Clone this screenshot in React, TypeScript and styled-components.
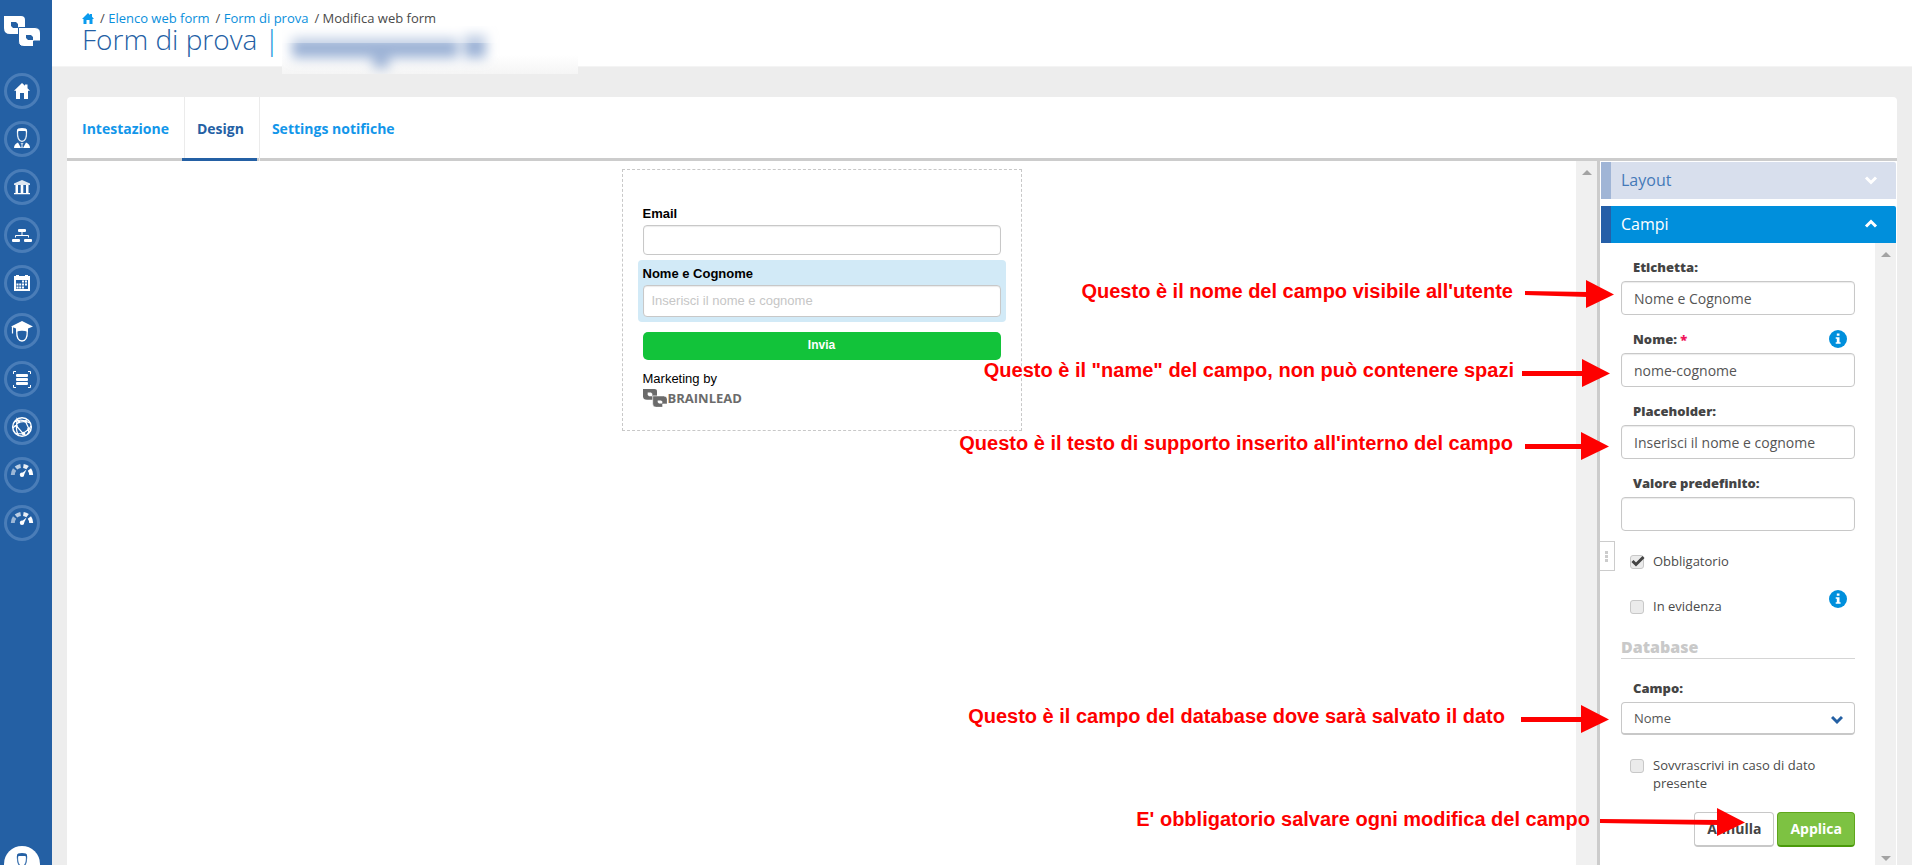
import React from "react";
import styled, { createGlobalStyle, css } from "styled-components";

const GlobalStyle = createGlobalStyle`
  *, *::before, *::after { box-sizing: border-box; }
  body {
    margin: 0;
    background: #ededed;
    color: #4a4a4a;
    font-family: "Open Sans", "Noto Sans", sans-serif;
    font-size: 13px;
    line-height: 18px;
  }
  a { color: inherit; text-decoration: none; }
  button, input, select { font: inherit; color: inherit; margin: 0; }
`;

/* ---------- shell ---------- */

const Shell = styled.div`
  position: relative;
  display: flex;
  height: 100vh;
  overflow: hidden;
`;

const Sidebar = styled.nav`
  display: flex;
  flex-direction: column;
  flex: none;
  width: 52px;
  padding: 16px 4px 0;
  background: #2460a4;
`;

const Brand = styled.a`
  display: block;
  height: 57px;
`;

const NavList = styled.ul`
  display: flex;
  flex-direction: column;
  gap: 12px;
  margin: 0;
  padding: 0;
  list-style: none;
`;

const NavLink = styled.a`
  display: block;
  width: 36px;
  height: 36px;
  border-radius: 50%;
  box-shadow: inset 0 0 0 3px #4a7db8;
`;

const Account = styled.a`
  flex: none;
  width: 36px;
  height: 36px;
  margin-top: auto;
  margin-bottom: -17px;
  border-radius: 50%;
  background: #fff;
`;

const Main = styled.div`
  display: flex;
  flex-direction: column;
  flex: 1;
  min-width: 0;
`;

const Header = styled.header`
  position: relative;
  flex: none;
  height: 67px;
  padding: 9px 30px 0;
  background: #fff;
  border-bottom: 1px solid #f4f4f4;
`;

const Crumbs = styled.nav`
  display: flex;
  align-items: center;
  gap: 6px;
  height: 18px;
`;

const CrumbLink = styled.a`
  color: #0a8fdc;
`;

const Crumb = styled.span`
  white-space: pre;
`;

const Title = styled.h1`
  margin: 0;
  color: #2460a4;
  font-size: 28px;
  font-weight: 300;
  line-height: 24px;
`;

const Bar = styled.span`
  margin-left: 7px;
  color: #0a8fdc;
`;

const Redacted = styled.div`
  position: absolute;
  top: 26px;
  left: 230px;
  width: 296px;
  height: 48px;
  overflow: hidden;
  background: linear-gradient(#ffffff 60%, #f5f5f5);
`;

/* ---------- card and tabs ---------- */

const Card = styled.main`
  display: flex;
  flex-direction: column;
  flex: 1;
  min-height: 0;
  margin: 30px 15px 0;
  background: #fff;
  border-radius: 4px 4px 0 0;
`;

const Tabs = styled.div`
  display: flex;
  flex: none;
  height: 64px;
  border-bottom: 3px solid #ccc;
`;

const Tab = styled.button<{ $active?: boolean }>`
  position: relative;
  height: 64px;
  padding: 0 15px 1px 12px;
  border: 0;
  border-left: 1px solid #ebebeb;
  background: none;
  color: ${(p) => (p.$active ? "#2460a4" : "#1296ea")};
  font-size: 14px;
  font-weight: 700;
  cursor: pointer;
  &:first-child {
    border-left: 0;
    padding-left: 15px;
  }
  ${(p) =>
    p.$active &&
    css`
      &::after {
        content: "";
        position: absolute;
        left: -3px;
        right: 2px;
        bottom: 0;
        height: 3px;
        background: #2460a4;
      }
    `}
`;

const Workspace = styled.div`
  display: flex;
  flex: 1;
  min-height: 0;
`;

const Preview = styled.section`
  display: flex;
  flex: 1;
  min-width: 0;
  justify-content: center;
  align-items: flex-start;
  padding-top: 8px;
`;

const Scrollbar = styled.div`
  display: flex;
  flex-direction: column;
  justify-content: space-between;
  align-items: center;
  flex: none;
  width: 21px;
  padding: 9px 0 4px;
  background: #f0f0f0;
`;

const Caret = styled.i<{ $down?: boolean }>`
  border: 5px solid transparent;
  border-top-width: ${(p) => (p.$down ? 5 : 0)}px;
  border-bottom-width: ${(p) => (p.$down ? 0 : 5)}px;
  border-${(p) => (p.$down ? "top" : "bottom")}-color: #a3a3a3;
`;

/* ---------- form preview ---------- */

const FormBox = styled.form`
  width: 400px;
  padding: 30px 15px 22px;
  border: 1px dashed #c8c8c8;
  color: #000;
  font-family: "Liberation Sans", Arial, sans-serif;
`;

const FormField = styled.div<{ $selected?: boolean }>`
  padding: 5px;
  margin-bottom: ${(p) => (p.$selected ? 10 : 0)}px;
  border-radius: 4px;
  background: ${(p) => (p.$selected ? "#d2eaf7" : "transparent")};
`;

const FormLabel = styled.label`
  display: block;
  height: 20px;
  line-height: 18px;
  font-weight: 700;
`;

const FormInput = styled.input<{ $tall?: boolean }>`
  display: block;
  width: 100%;
  height: ${(p) => (p.$tall ? 32 : 30)}px;
  padding: 0 8px 2px;
  border: 1px solid #c8c8c8;
  border-radius: 4px;
  background: #fff;
  box-shadow: inset 0 1px 1px rgba(0, 0, 0, 0.08);
  &::placeholder { color: #c6c6c6; opacity: 1; }
`;

const Submit = styled.button`
  display: block;
  width: 358px;
  height: 28px;
  margin: 0 5px;
  padding: 0 0 2px;
  border: 0;
  border-radius: 5px;
  background: #12c33a;
  color: #fff;
  font-size: 12px;
  font-weight: 700;
`;

const Credit = styled.div`
  margin: 10px 5px 0;
`;

const CreditBrand = styled.a`
  display: flex;
  align-items: center;
  gap: 1px;
  height: 20px;
  color: #6b6b6b;
  font-family: "Open Sans", sans-serif;
  font-size: 13px;
  font-weight: 700;
`;

/* ---------- properties panel ---------- */

const Panel = styled.aside`
  position: relative;
  display: flex;
  flex-direction: column;
  flex: none;
  width: 300px;
  padding: 1px 1px 0 1px;
  border-left: 3px solid #ccc;
`;

const Section = styled.button<{ $open?: boolean }>`
  display: flex;
  align-items: center;
  justify-content: space-between;
  flex: none;
  height: 37px;
  padding: 0 18px 2px 10px;
  margin-bottom: ${(p) => (p.$open ? 0 : 7)}px;
  border: 0;
  border-left: 10px solid ${(p) => (p.$open ? "#255fa8" : "#a0b5d6")};
  border-radius: 0 2px 0 0;
  background: ${(p) => (p.$open ? "#008fdc" : "#d8dfed")};
  color: ${(p) => (p.$open ? "#fff" : "#4479b8")};
  font-size: 16px;
  cursor: pointer;
`;

const PanelBody = styled.div`
  display: flex;
  flex: 1;
  min-height: 0;
`;

const Properties = styled.form`
  flex: 1;
  min-width: 0;
  padding: 14px 20px 0;
`;

const Field = styled.div`
  margin-bottom: 14px;
`;

const FieldHead = styled.div`
  display: flex;
  justify-content: space-between;
  align-items: center;
  height: 24px;
  padding: 0 8px 5px 12px;
`;

const FieldLabel = styled.label`
  color: #444;
  font-weight: 800;
`;

const Required = styled.span`
  color: #f0145a;
`;

const TextInput = styled.input`
  display: block;
  width: 100%;
  height: 34px;
  padding: 0 12px;
  border: 1px solid #c8c8c8;
  border-radius: 4px;
  background: #fff;
  box-shadow: inset 0 1px 1px rgba(0, 0, 0, 0.08);
  color: #555;
  font-size: 14px;
`;

const CheckRow = styled.div`
  display: flex;
  gap: 9px;
  padding: 0 8px 0 9px;
  margin-bottom: 20px;
`;

const CheckLabel = styled.label`
  flex: 1;
  margin-top: 7px;
`;

const CheckWrap = styled.span`
  position: relative;
  flex: none;
  width: 14px;
  height: 14px;
  margin-top: 10px;
`;

const Checkbox = styled.input`
  appearance: none;
  display: block;
  width: 14px;
  height: 14px;
  border: 1px solid #c8c8c8;
  border-radius: 3px;
  background: #ebebeb;
  & + svg { display: none; }
  &:checked + svg { display: block; }
`;

const Tick = styled.svg`
  position: absolute;
  top: 0;
  left: 1px;
  pointer-events: none;
`;

const Info = styled.button`
  display: block;
  flex: none;
  width: 18px;
  height: 18px;
  padding: 0;
  border: 0;
  background: none;
`;

const Group = styled.h2`
  margin: 0 0 19px;
  height: 24px;
  border-bottom: 1px solid #d5d5d5;
  color: #c9c9c9;
  font-size: 16px;
  font-weight: 800;
  line-height: 24px;
`;

const SelectWrap = styled.div`
  position: relative;
`;

const Select = styled.select`
  appearance: none;
  display: block;
  width: 100%;
  height: 33px;
  padding: 0 12px;
  border: 1px solid #c8c8c8;
  border-bottom-width: 2px;
  border-radius: 4px;
  background: #fff;
  color: #555;
`;

const SelectArrow = styled.svg`
  position: absolute;
  top: 13px;
  right: 12px;
  pointer-events: none;
`;

const Actions = styled.div`
  display: flex;
  justify-content: flex-end;
  gap: 3px;
`;

const Action = styled.button<{ $primary?: boolean }>`
  height: 35px;
  padding: 0 12px;
  border: 1px solid ${(p) => (p.$primary ? "#5fa61c" : "#c8c8c8")};
  border-bottom: 2px solid ${(p) => (p.$primary ? "#4a9a0a" : "#c8c8c8")};
  border-radius: 4px;
  background: ${(p) => (p.$primary ? "#7dc242" : "#fff")};
  color: ${(p) => (p.$primary ? "#fff" : "#444")};
  font-size: 14px;
  font-weight: 700;
`;

const Handle = styled.button`
  position: absolute;
  top: 380px;
  left: 0;
  width: 15px;
  height: 30px;
  padding: 0;
  border: 1px solid #ccc;
  border-left: 0;
  background: #fff;
`;

/* ---------- callouts over the page ---------- */

const Callout = styled.div<{ $top: number; $right: number; $gap: number }>`
  position: absolute;
  top: ${(p) => p.$top}px;
  right: ${(p) => p.$right}px;
  display: flex;
  align-items: flex-start;
  gap: ${(p) => p.$gap}px;
  height: 28px;
  color: #fe0000;
  font-family: "Liberation Sans", Arial, sans-serif;
  font-size: 20px;
  font-weight: 700;
  line-height: 22px;
  white-space: nowrap;
  pointer-events: none;
`;

const callouts = [
  { text: "Questo è il nome del campo visibile all'utente", top: 280, right: 298, gap: 12, width: 89, rise: 2 },
  { text: 'Questo è il "name" del campo, non può contenere spazi', top: 359, right: 302, gap: 8, width: 88, rise: 0 },
  { text: "Questo è il testo di supporto inserito all'interno del campo", top: 432, right: 303, gap: 12, width: 84, rise: 0 },
  { text: "Questo è il campo del database dove sarà salvato il dato", top: 705, right: 303, gap: 16, width: 88, rise: 0 },
  { text: "E' obbligatorio salvare ogni modifica del campo", top: 808, right: 167, gap: 10, width: 145, rise: 2 },
];

function Arrow({ width, rise }: { width: number; rise: number }) {
  return (
    <svg width={width} height="28" viewBox={`0 0 ${width} 28`} fill="#fe0000">
      <path d={`M0 ${12 - rise / 2} L${width - 26} 12 V17 L0 ${17 - rise} Z`} />
      <path d={`M${width - 28} 0 L${width} 14.5 L${width - 28} 28 Z`} />
    </svg>
  );
}

/* ---------- icons ---------- */

function Logo({ w, h, fill, hole }: { w: number; h: number; fill: string; hole: string }) {
  return (
    <svg width={w} height={h} viewBox="0 0 36 30" preserveAspectRatio="none">
      <path fill={fill} d="M0 0H17Q21 0 21 4V18H6Q0 18 0 12Z" />
      <path fill={hole} d="M7 6H12L14 8V12H9L7 10Z" />
      <path fill={fill} stroke={hole} strokeWidth="1" d="M14.500 11.500H31Q36.500 12 36.500 17V25H29.500V30.500H20Q14.500 30.500 14.500 25Z" />
      <path fill={hole} d="M22 19H27L29 21V24H24L22 22Z" />
    </svg>
  );
}

function Person({ color }: { color: string }) {
  return (
    <g>
      <path d="M13.500 10Q13 20 18 20.500Q23 20 22.500 10" fill="none" stroke={color} strokeWidth="1.300" opacity="0.85" />
      <path d="M13 13V9Q13 7 18 7T23 9V13L21.500 10H14.500Z" fill={color} />
      <path d="M10 27Q10 23 14 21.500L17 27ZM26 27Q26 23 22 21.500L19 27Z" fill={color} />
      <path d="M16.500 22H19.500L18.500 24L19 27H17L17.500 24Z" fill={color} opacity="0.7" />
    </g>
  );
}

const Gauge = (
  <g>
    <path d="M8.800 18A9.200 9.200 0 0 1 10.600 12.500" fill="none" stroke="#fff" strokeWidth="4" opacity="0.55" />
    <path d="M12 11A9.200 9.200 0 0 1 16.600 8.900" fill="none" stroke="#fff" strokeWidth="4" opacity="0.7" />
    <path d="M19.400 8.900A9.200 9.200 0 0 1 23.600 10.700" fill="none" stroke="#fff" strokeWidth="4" opacity="0.9" />
    <path d="M25.400 12.500A9.200 9.200 0 0 1 27.200 18" fill="none" stroke="#fff" strokeWidth="4" />
    <circle cx="18" cy="17.700" r="2.200" fill="#fff" />
    <path d="M17 17L22.500 12.500L19.500 19Z" fill="#fff" />
  </g>
);

const icons: { label: string; art: React.ReactNode }[] = [
  {
    label: "Home",
    art: <path fill="#fff" d="M18 10L21 12.800V11.500H23.500V15.200L26 17.800H24V26H20V20H16V26H12V17.800H10Z" />,
  },
  { label: "Contatti", art: <Person color="#fff" /> },
  {
    label: "Aziende",
    art: (
      <g fill="#fff">
        <path d="M18 11L26 14.500V16H10V14.500Z" opacity="0.85" />
        <path d="M11.500 16H14V24H11.500ZM16.700 16H19.300V24H16.700ZM22 16H24.500V24H22ZM10 24H26V25.300H10Z" />
      </g>
    ),
  },
  {
    label: "Struttura",
    art: (
      <g fill="#fff">
        <rect x="14" y="12" width="8" height="3" rx="1" />
        <rect x="8" y="22" width="8" height="3" rx="1" />
        <rect x="20" y="22" width="8" height="3" rx="1" />
        <path d="M11.500 20.500V18.500H24.500V20.500M18 15V18.500" fill="none" stroke="#fff" />
      </g>
    ),
  },
  {
    label: "Calendario",
    art: (
      <g>
        <path fill="#fff" d="M10 11H12V10H15V11H21V10H24V11H26V26H10Z" />
        <path fill="#2460a4" d="M12 15H24V24H12Z" />
        <path fill="#fff" d="M18 15.500h2v2h-2zM21 15.500h2v2h-2zM12.500 18.500h2v2h-2zM15.200 18.500h2v2h-2zM18 18.500h2v2h-2zM21 18.500h2v2h-2zM12.500 21.500h2v2h-2zM15.200 21.500h2v2h-2zM18 21.500h2v2h-2z" />
      </g>
    ),
  },
  {
    label: "Formazione",
    art: (
      <g fill="#fff">
        <path d="M18 8L29 13.500L24 15.500V19Q18 16.500 12 19V15.500L7 13.500Z" />
        <path d="M8.500 14V20.500" stroke="#fff" strokeWidth="1.200" />
        <path d="M12.700 18Q12.500 28 18 28T23.300 18" fill="none" stroke="#fff" strokeWidth="1.300" />
      </g>
    ),
  },
  {
    label: "Liste",
    art: (
      <g fill="#fff">
        <rect x="12" y="13" width="12" height="3" rx="1" />
        <rect x="12" y="17" width="12" height="3" rx="1" />
        <rect x="12" y="21" width="12" height="3" rx="1" />
        <path d="M12 10.500H9.500V13M24 10.500H26.500V13M9.500 24V26.500H12M26.500 24V26.500H24" fill="none" stroke="#fff" />
      </g>
    ),
  },
  {
    label: "Rete",
    art: (
      <g fill="none" stroke="#fff" strokeWidth="1.200">
        <circle cx="18" cy="18" r="9.300" strokeWidth="1.500" />
        <path d="M10 13Q17 9 26 14M13 10L12.500 17L19 24.500L25 20L21.500 12.500L15 13ZM9 19Q12 16 15 13M12.500 17Q12 23 15 27M19 24.500Q16 25 12 24.500M25 20L27 17M21.500 12.500L23 10M19 24.500L22 26.500M25 20Q25 23 23.500 25" />
        <g fill="#fff" stroke="none">
          <circle cx="15" cy="13" r="1.300" />
          <circle cx="21.500" cy="12.500" r="1.300" />
          <circle cx="12.500" cy="17" r="1.300" />
          <circle cx="19.500" cy="24.500" r="1.700" />
          <circle cx="24.500" cy="20" r="1.300" />
        </g>
      </g>
    ),
  },
  { label: "Statistiche", art: Gauge },
  { label: "Report", art: Gauge },
];

function Chevron({ up, color = "#fff" }: { up?: boolean; color?: string }) {
  return (
    <svg width="14" height="10" viewBox="0 0 14 10" fill="none" stroke={color} strokeWidth="3">
      <path d={up ? "M2 7.500L7 2.500L12 7.500" : "M2 2.500L7 7.500L12 2.500"} />
    </svg>
  );
}

function InfoButton() {
  return (
    <Info type="button" aria-label="Informazioni">
      <svg width="18" height="18" viewBox="0 0 18 18" display="block">
        <circle cx="9" cy="9" r="9" fill="#008fdc" />
        <path fill="#fff" d="M7.800 3.500h2.700v2.300H7.800zM6.700 7.200h3.800v5h1.100v1.600H6.700v-1.600h1.100V8.800H6.700z" />
      </svg>
    </Info>
  );
}

function CheckOption(props: { id: string; label: string; checked?: boolean; info?: boolean }) {
  return (
    <CheckRow>
      <CheckWrap>
        <Checkbox id={props.id} type="checkbox" defaultChecked={props.checked} />
        <Tick width="14" height="12" viewBox="0 0 14 12" fill="none" stroke="#444" strokeWidth="3">
          <path d="M1.500 6L5 9.500L12.500 2" />
        </Tick>
      </CheckWrap>
      <CheckLabel htmlFor={props.id}>{props.label}</CheckLabel>
      {props.info && <InfoButton />}
    </CheckRow>
  );
}

const fields = [
  { id: "etichetta", label: "Etichetta:", value: "Nome e Cognome" },
  { id: "nome", label: "Nome:", value: "nome-cognome", required: true, info: true },
  { id: "placeholder", label: "Placeholder:", value: "Inserisci il nome e cognome" },
  { id: "predefinito", label: "Valore predefinito:", value: "" },
];

export default function App() {
  return (
    <Shell>
      <GlobalStyle />
      <Sidebar aria-label="Principale">
        <Brand href="#" aria-label="Brainlead">
          <Logo w={36} h={30} fill="#fff" hole="#2460a4" />
        </Brand>
        <NavList>
          {icons.map((icon) => (
            <li key={icon.label}>
              <NavLink href="#" aria-label={icon.label}>
                <svg width="36" height="36" viewBox="0 0 36 36" display="block">{icon.art}</svg>
              </NavLink>
            </li>
          ))}
        </NavList>
        <Account href="#" aria-label="Account">
          <svg width="36" height="36" viewBox="0 0 36 36" display="block">
            <Person color="#2460a4" />
          </svg>
        </Account>
      </Sidebar>

      <Main>
        <Header>
          <Crumbs aria-label="Percorso">
            <CrumbLink href="#" aria-label="Home">
              <svg width="12" height="11" viewBox="0 0 12 11" fill="#0a9bee" display="block">
                <path d="M6 0L8 2V1H10V3.800L12 6H10.500V11H7.500V7H4.500V11H1.500V6H0Z" />
              </svg>
            </CrumbLink>
            <Crumb>/ <CrumbLink href="#">Elenco web form</CrumbLink></Crumb>
            <Crumb>/ <CrumbLink href="#">Form di prova</CrumbLink></Crumb>
            <Crumb>/ Modifica web form</Crumb>
          </Crumbs>
          <Title>
            Form di prova<Bar>|</Bar>
          </Title>
          <Redacted>
            <svg width="296" height="48" viewBox="0 0 296 48">
              <defs>
                <filter id="soft" x="-20%" y="-60%" width="140%" height="220%">
                  <feGaussianBlur stdDeviation="6" />
                </filter>
              </defs>
              <g filter="url(#soft)" fill="#9db3d6">
                <rect x="10" y="12" width="166" height="20" />
                <rect x="91" y="14" width="16" height="28" />
                <rect x="182" y="9" width="22" height="23" />
              </g>
              <rect width="296" height="17" fill="#fff" opacity="0.35" />
            </svg>
          </Redacted>
        </Header>

        <Card>
          <Tabs role="tablist">
            <Tab role="tab">Intestazione</Tab>
            <Tab role="tab" aria-selected $active>Design</Tab>
            <Tab role="tab">Settings notifiche</Tab>
          </Tabs>
          <Workspace>
            <Preview>
              <FormBox>
                <FormField>
                  <FormLabel htmlFor="p-email">Email</FormLabel>
                  <FormInput id="p-email" />
                </FormField>
                <FormField $selected>
                  <FormLabel htmlFor="p-nome">Nome e Cognome</FormLabel>
                  <FormInput id="p-nome" $tall placeholder="Inserisci il nome e cognome" />
                </FormField>
                <Submit type="button">Invia</Submit>
                <Credit>
                  Marketing by
                  <CreditBrand href="#">
                    <Logo w={24} h={18} fill="#6b6b6b" hole="#fff" />
                    BRAINLEAD
                  </CreditBrand>
                </Credit>
              </FormBox>
            </Preview>
            <Scrollbar>
              <Caret />
            </Scrollbar>
            <Panel>
              <Section type="button">
                Layout <Chevron />
              </Section>
              <Section type="button" $open>
                Campi <Chevron up />
              </Section>
              <PanelBody>
                <Properties>
                  {fields.map((f) => (
                    <Field key={f.id}>
                      <FieldHead>
                        <FieldLabel htmlFor={f.id}>
                          {f.label} {f.required && <Required>*</Required>}
                        </FieldLabel>
                        {f.info && <InfoButton />}
                      </FieldHead>
                      <TextInput id={f.id} defaultValue={f.value} />
                    </Field>
                  ))}
                  <CheckOption id="obbligatorio" label="Obbligatorio" checked />
                  <CheckOption id="evidenza" label="In evidenza" info />
                  <Group>Database</Group>
                  <Field>
                    <FieldHead>
                      <FieldLabel htmlFor="campo">Campo:</FieldLabel>
                    </FieldHead>
                    <SelectWrap>
                      <Select id="campo" defaultValue="Nome">
                        <option>Nome</option>
                      </Select>
                      <SelectArrow width="12" height="10" viewBox="0 0 12 10" fill="none" stroke="#2460a4" strokeWidth="3">
                        <path d="M1 2L6 7L11 2" />
                      </SelectArrow>
                    </SelectWrap>
                  </Field>
                  <CheckOption id="sovrascrivi" label="Sovvrascrivi in caso di dato presente" />
                  <Actions>
                    <Action type="button">Annulla</Action>
                    <Action type="button" $primary>Applica</Action>
                  </Actions>
                </Properties>
                <Scrollbar>
                  <Caret />
                  <Caret $down />
                </Scrollbar>
              </PanelBody>
              <Handle type="button" aria-label="Ridimensiona">
                <svg width="14" height="28" viewBox="0 0 14 28" fill="#ccc" display="block">
                  <path d="M5 9h3v3H5zM5 13h3v3H5zM5 17h3v3H5z" />
                </svg>
              </Handle>
            </Panel>
          </Workspace>
        </Card>
      </Main>

      {callouts.map((c) => (
        <Callout key={c.text} $top={c.top} $right={c.right} $gap={c.gap}>
          {c.text}
          <Arrow width={c.width} rise={c.rise} />
        </Callout>
      ))}
    </Shell>
  );
}
